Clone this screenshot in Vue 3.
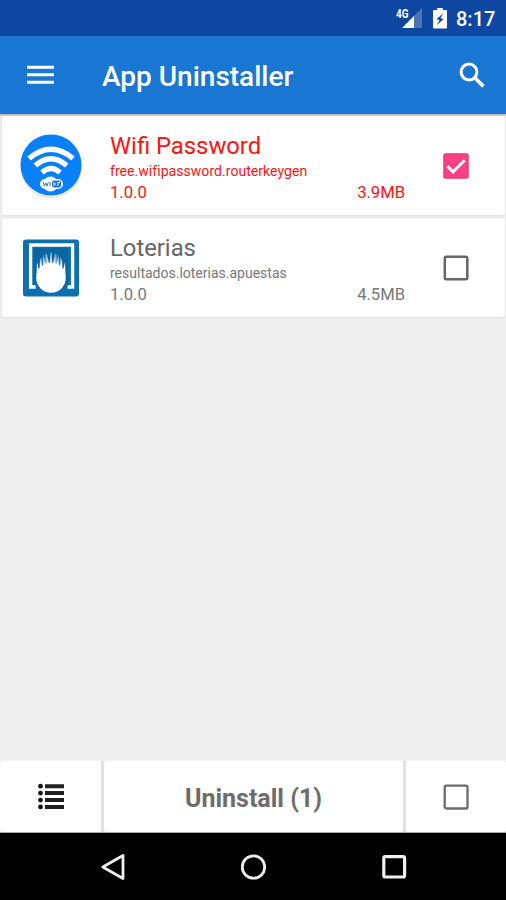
<script setup>
import { ref, computed } from 'vue'

const apps = ref([
  { name: 'Wifi Password', pkg: 'free.wifipassword.routerkeygen', version: '1.0.0', size: '3.9MB', icon: 'wifi', checked: true },
  { name: 'Loterias', pkg: 'resultados.loterias.apuestas', version: '1.0.0', size: '4.5MB', icon: 'ball', checked: false },
])
const selected = computed(() => apps.value.filter((a) => a.checked).length)
</script>

<template>
  <div class="screen">
    <div class="status">
      <svg class="signal" width="28" height="24" viewBox="0 0 28 24">
        <path d="M27 3v20H7z" fill="#4a74b5" />
        <path d="M19 11v12H7z" fill="#fff" />
        <text x="1" y="12.500" class="net" textLength="12.500" lengthAdjust="spacingAndGlyphs">4G</text>
      </svg>
      <svg class="battery" width="14" height="21" viewBox="0 0 14 21">
        <path d="M4.2 0h5.6v2H13q1 0 1 1v16.500q0 1-1 1H1q-1 0-1-1V3q0-1 1-1h3.200z" fill="#fff" />
        <path d="M10.300 5.200L3.400 11.200l3.200.8-2.700 5.300 6.700-6.200-3.200-.8z" fill="#0d47a1" />
      </svg>
      <span class="clock">8:17</span>
    </div>

    <header class="bar">
      <svg class="menu" width="27" height="20" viewBox="0 0 27 20">
        <path d="M0 2.200h27M0 9.700h27M0 17.200h27" stroke="#fff" stroke-width="3.100" />
      </svg>
      <h1>App Uninstaller</h1>
      <svg class="search" width="27" height="27" viewBox="0 0 27 27">
        <circle cx="10" cy="10" r="7.900" fill="none" stroke="#fff" stroke-width="3" />
        <path d="M15.800 15.800l8.600 8.600" stroke="#fff" stroke-width="3.700" />
      </svg>
    </header>

    <main class="list">
      <article v-for="app in apps" :key="app.pkg" class="card" :class="{ on: app.checked }">
        <svg v-if="app.icon === 'wifi'" class="icon" width="64" height="66" viewBox="0 0 64 66">
          <circle cx="32" cy="33.800" r="31" fill="#d9d9d9" />
          <circle cx="32" cy="32.500" r="31.300" fill="#f2f2f2" />
          <circle cx="32" cy="32" r="30.500" fill="#0a80f8" />
          <g fill="none" stroke="#fff" stroke-width="5.200">
            <path d="M10 25.500Q32 7 54 25.500" />
            <path d="M16.300 32.500Q32 19 47.700 32.500" />
            <path d="M23 39.500Q32 31.500 41 39.500" />
          </g>
          <rect x="21" y="46" width="23" height="10" rx="5" fill="#fff" />
          <ellipse cx="31.500" cy="51" rx="7.500" ry="7.500" fill="#fff" />
          <path d="M24 49l1.400 4 1.300-3 1.300 3 1.400-4M31 49v4" fill="none" stroke="#2478c8" stroke-width="1" />
          <rect x="33" y="47.500" width="9" height="7" rx="2" fill="#1976d2" />
          <path d="M35 49v4M35 51h2M39 49v4M39 49.500h2" stroke="#fff" stroke-width=".9" />
        </svg>
        <svg v-else class="icon" width="64" height="66" viewBox="0 0 64 66">
          <defs>
            <linearGradient id="trail" gradientUnits="userSpaceOnUse" x1="0" y1="16" x2="0" y2="31">
              <stop offset="0" stop-color="#fff" stop-opacity=".25" />
              <stop offset="1" stop-color="#fff" />
            </linearGradient>
          </defs>
          <rect x="4" y="4.500" width="56" height="57" rx="3" fill="#0b6fb0" />
          <path d="M15 13h34v40H15z" fill="#0a65a3" />
          <path d="M16.700 52H11.600V10H53.600V52H48.500" fill="none" stroke="#fff" stroke-width="3.300" />
          <ellipse cx="32" cy="42.800" rx="14.800" ry="15" fill="#fff" />
          <path
            d="M17.500 40l.5-13 2.500 10 .5-14 3 11 .3-15 2.900 12 .4-14 2.800 13 1.600-14 1.600 14 2.800-13 .4 14 2.900-12 .3 15 3-11 .5 14 2.500-10 .5 13z"
            fill="url(#trail)"
          />
          <path d="M22.500 31v-8M27 28.500v-9M32 28v-10M37 28.500v-9M41.500 31v-8" stroke="#fff" stroke-opacity=".45" stroke-width="1.400" />
        </svg>
        <div class="info">
          <div class="name">{{ app.name }}</div>
          <div class="pkg">{{ app.pkg }}</div>
          <div class="meta"><span>{{ app.version }}</span><span class="size">{{ app.size }}</span></div>
        </div>
        <svg class="check" width="26" height="26" viewBox="0 0 26 26" @click="app.checked = !app.checked">
          <template v-if="app.checked">
            <rect x=".3" y=".3" width="25.400" height="25.400" rx="2.500" fill="#e8307a" />
            <rect x="1.500" y="1.500" width="23" height="23" rx="1.500" fill="#ff4081" />
            <path d="M4.300 13.200l5.700 5.700L21.700 7.200" fill="none" stroke="#fff" stroke-width="2.900" />
          </template>
          <rect v-else x="1.800" y="1.800" width="22.500" height="22.500" rx="1.500" fill="none" stroke="#666" stroke-width="2.500" />
        </svg>
      </article>
    </main>

    <footer class="actions">
      <div class="cell side">
        <svg class="rows" width="26" height="27" viewBox="0 0 26 27">
          <path d="M7 3.200h19M7 10.100h19M7 17.100h19M7 23.900h19" stroke="#212121" stroke-width="4" />
          <g fill="#111">
            <circle cx="2.500" cy="3.200" r="2.400" /><circle cx="2.500" cy="10.100" r="2.400" />
            <circle cx="2.500" cy="17.100" r="2.400" /><circle cx="2.500" cy="23.900" r="2.400" />
          </g>
        </svg>
      </div>
      <div class="cell main">Uninstall ({{ selected }})</div>
      <div class="cell side last">
        <svg class="all" width="26" height="26" viewBox="0 0 26 26">
          <rect x="1.700" y="1.700" width="22.800" height="22.800" rx="1.500" fill="none" stroke="#6c6c6c" stroke-width="2.300" />
        </svg>
      </div>
    </footer>

    <nav class="nav">
      <svg width="26" height="28" viewBox="0 0 26 28">
        <path d="M23 2.500v23L2.800 14z" fill="none" stroke="#f0f0f0" stroke-width="2.800" stroke-linejoin="round" />
      </svg>
      <svg width="26" height="28" viewBox="0 0 26 28">
        <circle cx="13.500" cy="14" r="11.200" fill="none" stroke="#f0f0f0" stroke-width="2.800" />
      </svg>
      <svg width="26" height="28" viewBox="0 0 26 28">
        <rect x="2.800" y="3.700" width="20.800" height="20.300" rx="1.500" fill="none" stroke="#f0f0f0" stroke-width="3.200" />
      </svg>
    </nav>
  </div>
</template>

<style>
body { margin: 0; }
</style>

<style scoped>
.screen {
  width: 506px;
  height: 900px;
  display: flex;
  flex-direction: column;
  overflow: hidden;
  background: #eee;
  font-family: Roboto, "Liberation Sans", sans-serif;
}
svg { display: block; flex: none; }
.status {
  height: 36px;
  flex: none;
  display: flex;
  box-sizing: border-box;
  padding-left: 395px;
  background: #0d47a1;
}
.signal { margin-top: 5px; }
.net { font-size: 12.500px; font-weight: 700; fill: #fff; }
.battery { margin: 8px 0 0 10px; }
.clock {
  margin: 1px 0 0 9px;
  line-height: 36px;
  font-size: 20px;
  font-weight: 500;
  color: #fff;
  white-space: nowrap;
}
.bar {
  height: 78px;
  flex: none;
  display: flex;
  align-items: center;
  box-sizing: border-box;
  padding: 0 20px 0 26.500px;
  background: #1976d2;
  box-shadow: 0 1px 2px rgba(0, 0, 0, .35);
  position: relative;
}
h1 {
  flex: 1;
  margin: 3px 0 0 48.500px;
  font-size: 28px;
  font-weight: 500;
  line-height: 36px;
  color: #fff;
  white-space: nowrap;
}
.list {
  flex: 1;
  display: flex;
  flex-direction: column;
  gap: 3px;
  padding: 2px 1px 0 2px;
}
.card {
  height: 99px;
  display: flex;
  box-sizing: border-box;
  padding-left: 17px;
  background: #fff;
  border-radius: 2px;
  box-shadow: 0 0 2px rgba(0, 0, 0, .13);
  color: #777;
}
.card.on { color: #fb1414; }
.icon { margin-top: 17px; }
.info { width: 295px; margin-left: 27px; padding-top: 15px; }
.name { font-size: 23.800px; line-height: 30px; }
.card:not(.on) .name { color: #666; }
.pkg { font-size: 14px; line-height: 20px; }
.card.on .pkg { letter-spacing: .05px; }
.meta { display: flex; justify-content: space-between; font-size: 16.600px; line-height: 23px; }
.check { margin: 36.500px 0 0 37.500px; }
.actions {
  height: 73px;
  flex: none;
  display: flex;
  gap: 3px;
  box-sizing: border-box;
  background: #e2e2e2;
  border-top: 1px solid #f4f4f4;
  border-bottom: 1px solid #aaa;
}
.cell { display: flex; align-items: center; justify-content: center; background: #fff; border-radius: 2px; }
.side { width: 101px; }
.main { width: 299px; padding-top: 4px; box-sizing: border-box; font-size: 25px; font-weight: 700; color: #6c6c6c; }
.last { width: 100px; }
.nav {
  height: 67px;
  flex: none;
  display: flex;
  align-items: center;
  justify-content: center;
  gap: 114.500px;
  background: #000;
}
</style>
